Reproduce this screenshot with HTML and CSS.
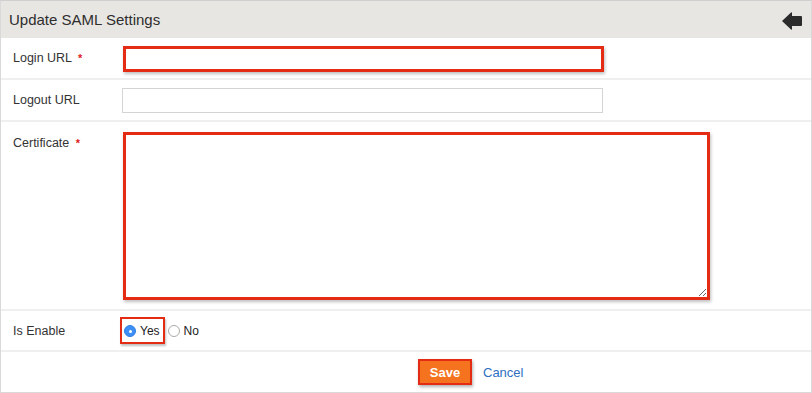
FILE: index.html
```html
<!DOCTYPE html>
<html>
<head>
<meta charset="utf-8">
<link rel="stylesheet" href="styles.css">
</head>
<body>
<div class="panel">
  <div class="panel-head">
    <h1 class="title">Update SAML Settings</h1>
    <svg class="back" width="22" height="20" viewBox="0 0 22 20">
      <path d="M1 10 L10 1.5 Q11 0.8 11 2 L11 5 L20 5 Q21 5 21 6 L21 14 Q21 15 20 15 L11 15 L11 18 Q11 19.2 10 18.5 Z" fill="#2b2b2b"/>
    </svg>
  </div>
  <div class="row row-login">
    <label class="label">Login URL <span class="req">*</span></label>
    <div class="field"><input class="input input-hl input-login" type="text"></div>
  </div>
  <div class="row row-logout">
    <label class="label">Logout URL</label>
    <div class="field"><input class="input input-logout" type="text"></div>
  </div>
  <div class="row row-cert">
    <label class="label">Certificate <span class="req">*</span></label>
    <div class="field"><textarea class="input input-hl cert"></textarea></div>
  </div>
  <div class="row row-enable">
    <label class="label">Is Enable</label>
    <div class="field radios">
      <span class="radio-hl"><span class="radio radio-on"></span><span class="rlabel">Yes</span></span>
      <span class="radio"></span><span class="rlabel">No</span>
    </div>
  </div>
  <div class="row row-actions">
    <span class="save-hl"><button class="save">Save</button></span>
    <a class="cancel">Cancel</a>
  </div>
</div>
</body>
</html>
```
FILE: styles.css
```css
html, body { margin: 0; padding: 0; background: #fff; }
body { font-family: "Liberation Sans", Arial, sans-serif; color: #333; }
.panel {
  width: 812px; height: 393px; box-sizing: border-box;
  border: 1px solid #d9d9d9; border-top-color: #cfcfcf;
}
.panel-head {
  height: 37px; background: #e8e6e3;
  display: flex; align-items: center; justify-content: space-between;
  padding: 0 8px 0 8px;
}
.title { margin: 0; font-size: 15px; font-weight: normal; color: #2e2e2e; }
.back { display: block; margin-top: 2px; }
.row {
  display: flex; align-items: center;
  border-bottom: 2px solid #efefef; box-sizing: border-box;
}
.label { width: 121px; padding-left: 12px; font-size: 12.5px; color: #333; box-sizing: border-box; flex: none; }
.req { color: #e02020; font-size: 11px; font-weight: bold; margin-left: 3px; }
.field { display: flex; align-items: center; }
.row-login { height: 42px; }
.row-logout { height: 42px; }
.row-cert { height: 189px; align-items: flex-start; }
.row-cert .label { padding-top: 14px; }
.row-enable { height: 41px; }
.row-actions { height: 40px; border-bottom: none; padding-left: 417px; }
.input { box-sizing: border-box; background: #fff; font: inherit; margin: 0; outline: none; }
.input-hl { border: 3px solid #e42c14; box-shadow: 1px 2px 3px rgba(0,0,0,0.25); }
.input-login { width: 481px; height: 26px; margin-left: 1px; margin-top: 1px; }
.input-logout { width: 481px; height: 25px; border: 1px solid #d4d4d4; }
.cert { width: 587px; height: 168px; margin-left: 1px; margin-top: 10px; resize: both; }
.radios { margin-left: -2px; font-size: 12px; color: #222; }
.radio-hl {
  display: inline-flex; align-items: center; height: 27px; padding: 0 3px 0 2px;
  border: 2px solid #e42c14; box-sizing: border-box; box-shadow: 1px 2px 2px rgba(0,0,0,0.25);
  margin-right: 3px;
}
.radio {
  display: inline-block; width: 12px; height: 12px; border-radius: 50%;
  border: 1px solid #aaa; background: #fff; box-sizing: border-box; position: relative;
}
.radio-on { background: #3d8ff5; border-color: #2f7fe5; }
.radio-on::after {
  content: ""; position: absolute; left: 4px; top: 4px; width: 3px; height: 3px; border-radius: 50%; background: #fff;
}
.rlabel { margin-left: 4px; font-size: 12px; }
.save-hl {
  display: inline-block; border: 2px solid #e42c14; padding: 1px;
  box-shadow: 1px 2px 3px rgba(0,0,0,0.3); background: #f5731f;
}
.save {
  display: block; width: 48px; height: 20px; border: none; background: #f5731f;
  color: #fff; font: bold 13px "Liberation Sans", Arial, sans-serif; padding: 0;
}
.cancel { color: #2d6fc0; font-size: 13px; margin-left: 11px; }
```
